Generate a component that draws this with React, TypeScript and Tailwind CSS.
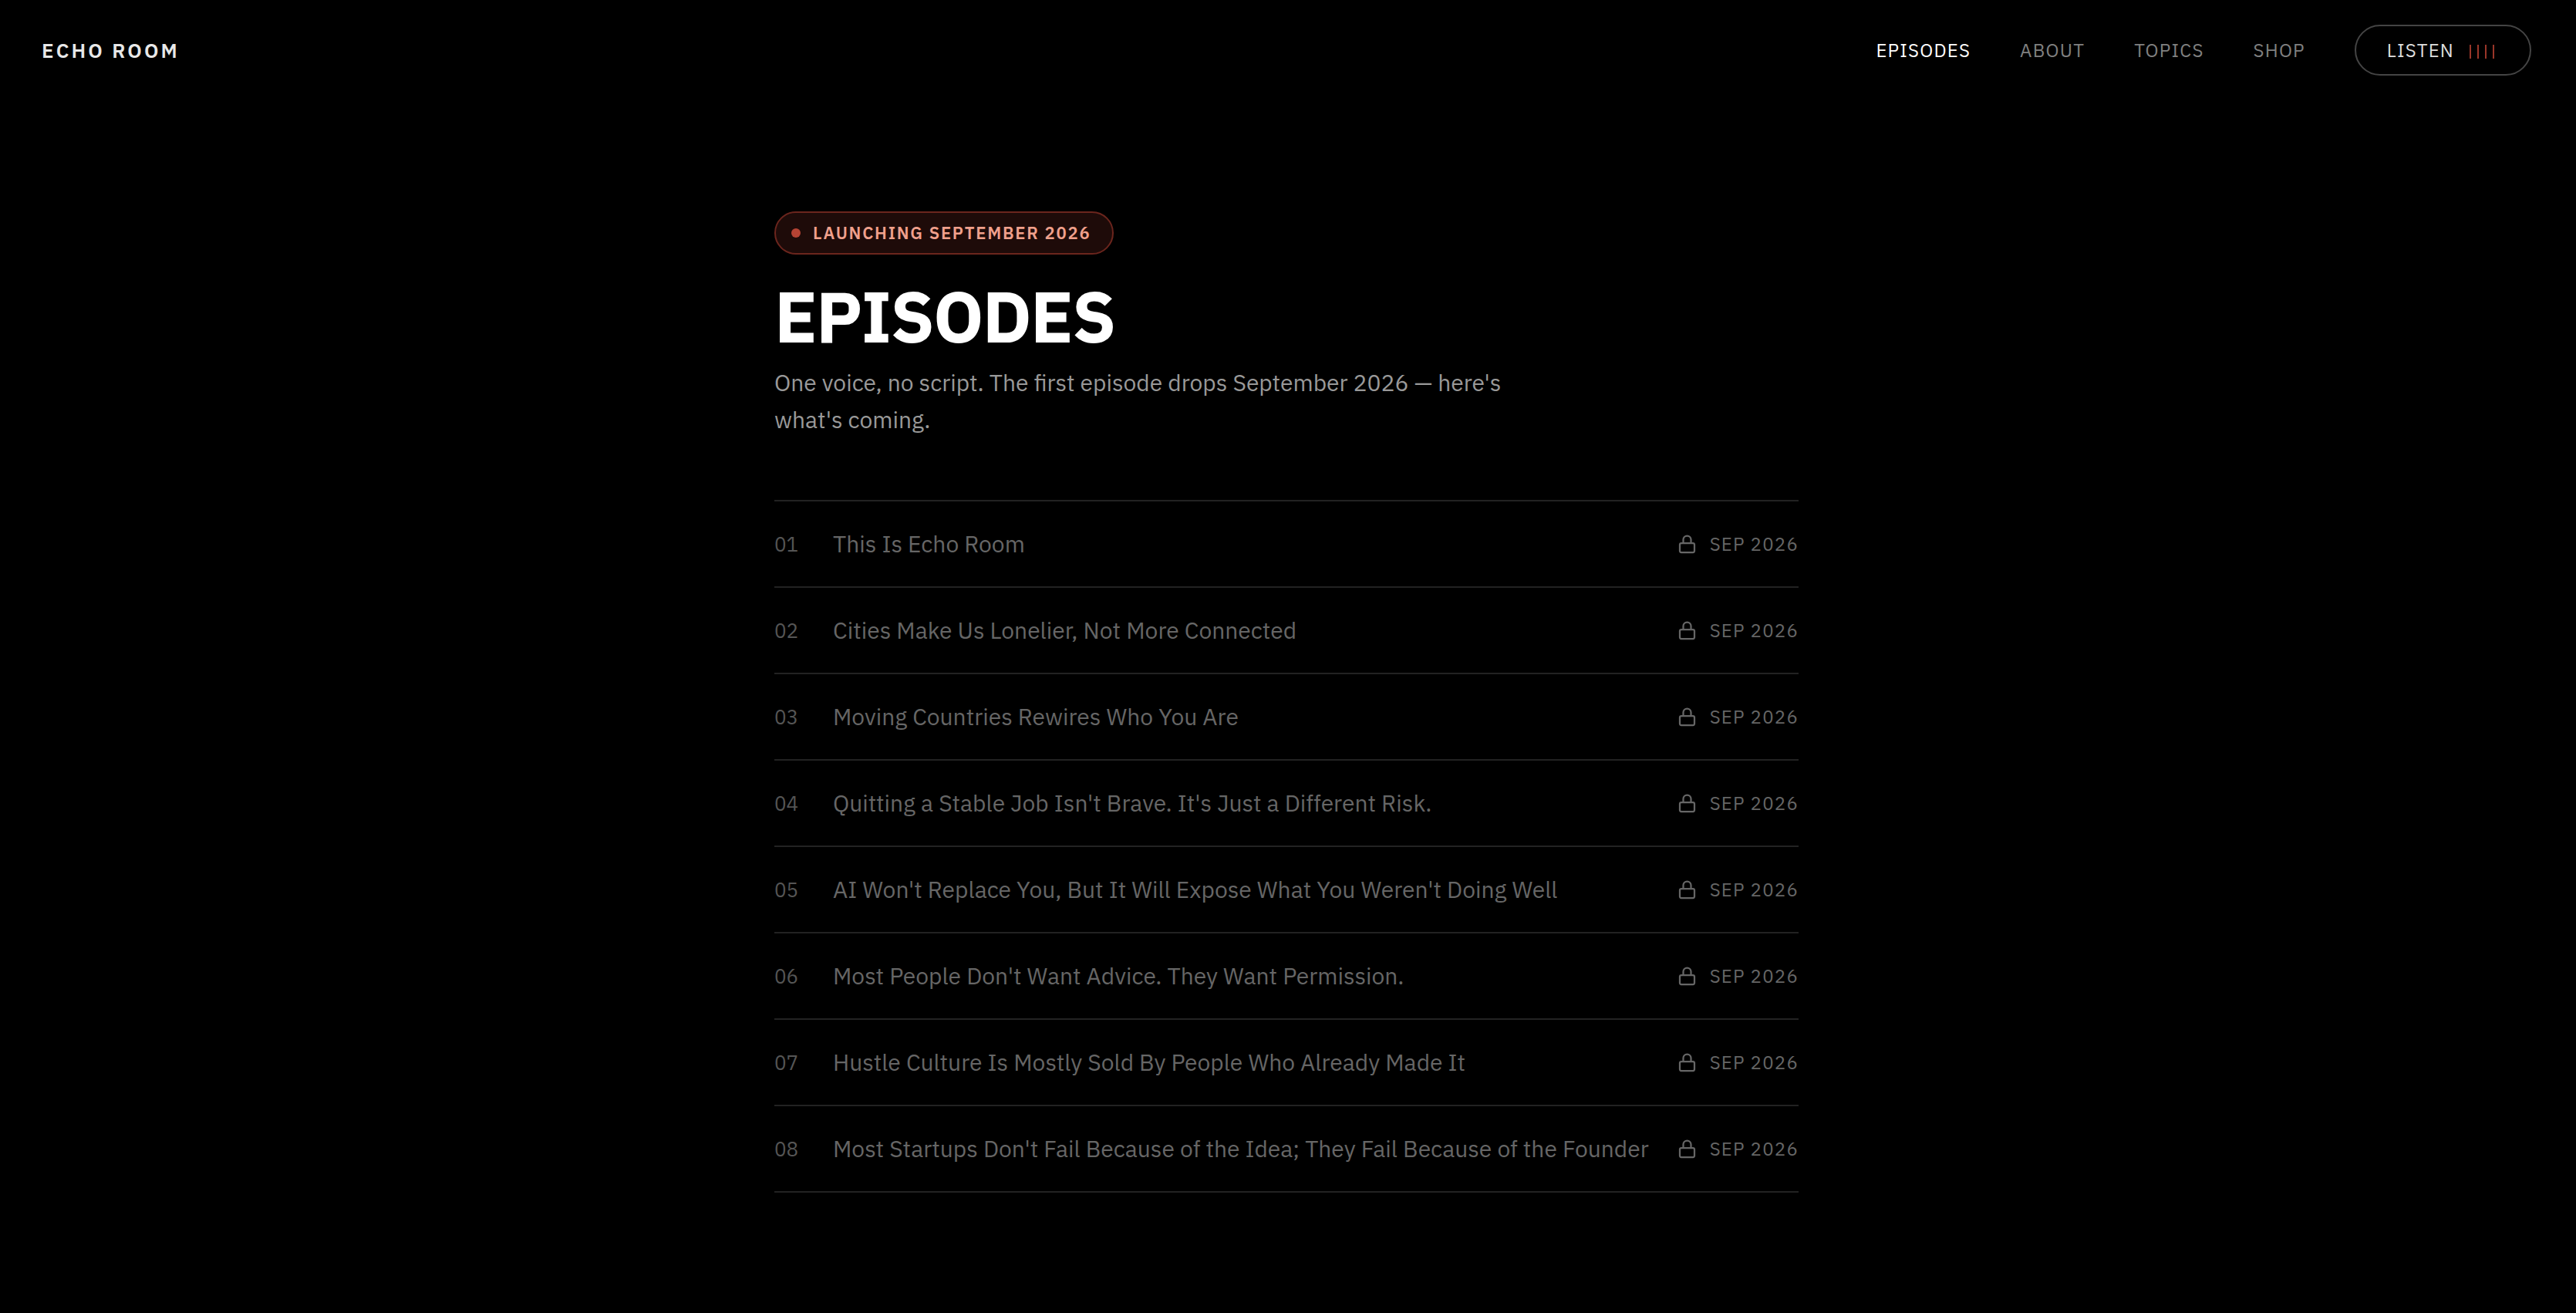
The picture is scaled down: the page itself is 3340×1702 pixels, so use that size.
const EPISODES = [
  "This Is Echo Room",
  "Cities Make Us Lonelier, Not More Connected",
  "Moving Countries Rewires Who You Are",
  "Quitting a Stable Job Isn't Brave. It's Just a Different Risk.",
  "AI Won't Replace You, But It Will Expose What You Weren't Doing Well",
  "Most People Don't Want Advice. They Want Permission.",
  "Hustle Culture Is Mostly Sold By People Who Already Made It",
  "Most Startups Don't Fail Because of the Idea; They Fail Because of the Founder",
];

const LINKS = ["About", "Topics", "Shop"];

function LockIcon() {
  return (
    <svg
      width="28"
      height="28"
      viewBox="0 0 28 28"
      fill="none"
      stroke="currentColor"
      strokeWidth="2.25"
      aria-hidden="true"
      className="shrink-0"
    >
      <rect x="5" y="13" width="19" height="12" rx="2" />
      <path d="M9.5 13V8.5a5 5 0 0 1 10 0V13" />
    </svg>
  );
}

function Bars() {
  return (
    <span className="flex h-[22px] w-[38px] items-end gap-2" aria-hidden="true">
      <span className="h-[18px] w-0.5 bg-[#9a3629]" />
      <span className="h-[18px] w-0.5 bg-[#9a3629]" />
      <span className="h-[18px] w-0.5 bg-[#9a3629]" />
      <span className="h-[18px] w-0.5 bg-[#9a3629]" />
    </span>
  );
}

export default function App() {
  return (
    <div className="min-h-screen bg-black pr-1 font-['IBM_Plex_Sans',Roboto,sans-serif] text-white">
      <header className="flex items-center justify-between px-[54px] py-8">
        <a href="#" className="text-[26px] leading-8 font-semibold tracking-[0.12em] text-[#e8e8e8] uppercase">
          Echo Room
        </a>
        <nav className="flex items-center gap-16 text-[24px] leading-8 tracking-[0.05em] uppercase">
          <a href="#" aria-current="page" className="text-white">
            Episodes
          </a>
          {LINKS.map((label) => (
            <a key={label} href="#" className="text-[#808080]">
              {label}
            </a>
          ))}
          <button
            type="button"
            className="flex h-[66px] items-center gap-5 rounded-full border-2 border-[#444444] px-10 tracking-[0.05em] text-[#dedede] uppercase"
          >
            Listen
            <Bars />
          </button>
        </nav>
      </header>

      <main className="mx-auto max-w-[1328px] pt-36 pb-40">
        <div className="flex h-14 w-fit items-center gap-4 rounded-full border-2 border-[#6b251d] bg-[#1e0b09] pr-7 pl-5">
          <span className="size-3 rounded-full bg-[#b54334]" />
          <span className="text-[22px] leading-8 font-semibold tracking-[0.08em] text-[#f0a08c] uppercase">
            Launching September 2026
          </span>
        </div>
        <h1 className="mt-8 text-[92px] leading-[96px] font-bold tracking-[-0.02em] uppercase">Episodes</h1>
        <p className="mt-[14px] max-w-[960px] text-[30px] leading-[48px] text-[#999999]">
          One voice, no script. The first episode drops September 2026 — here's what's coming.
        </p>

        <ol className="mt-20 border-t-2 border-[#222222]">
          {EPISODES.map((title, i) => (
            <li key={title} className="flex h-28 items-center border-b-2 border-[#222222]">
              <span className="w-[76px] shrink-0 text-[26px] leading-8 text-[#555555]">
                {String(i + 1).padStart(2, "0")}
              </span>
              <span className="flex-1 text-[30px] leading-10 text-[#666666]">{title}</span>
              <span className="flex items-center gap-4 text-[24px] leading-8 tracking-[0.05em] whitespace-nowrap text-[#666666] uppercase">
                <LockIcon />
                Sep 2026
              </span>
            </li>
          ))}
        </ol>
      </main>
    </div>
  );
}
